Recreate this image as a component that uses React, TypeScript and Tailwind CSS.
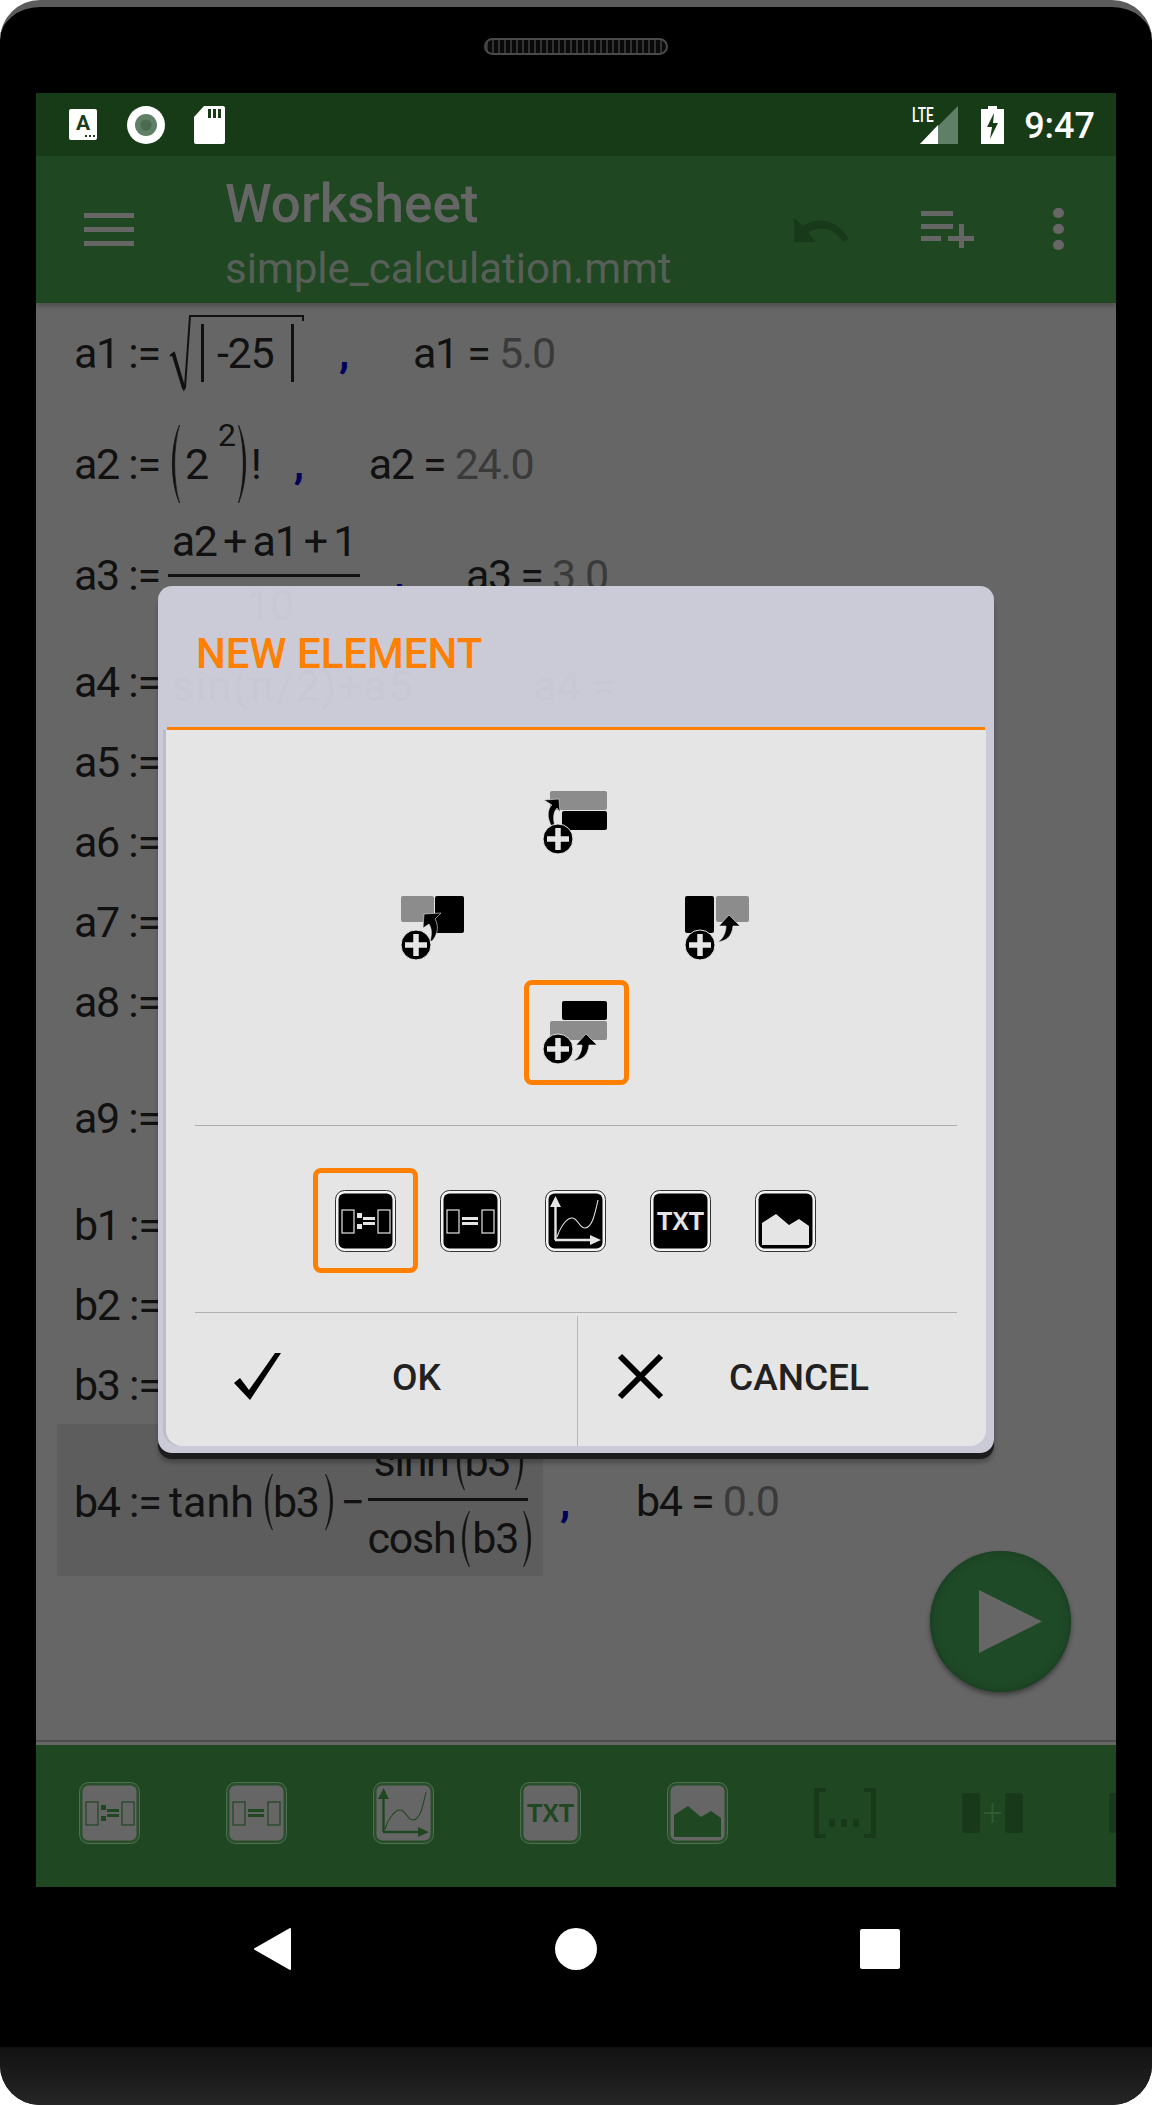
import type { ReactNode } from "react";

const MATH = "text-[43px] tracking-[-1.3px] leading-none text-[#111] whitespace-nowrap";
const RESULT = "text-[#3a3a3a]";

function Comma() {
  return <span className="text-[42px] leading-none font-bold text-[#00005a]">,</span>;
}

function Paren({ h, flip = false, className = "" }: { h: number; flip?: boolean; className?: string }) {
  return (
    <svg width="10" height={h} viewBox="0 0 10 100" preserveAspectRatio="none" className={`shrink-0 ${flip ? "-scale-x-100" : ""} ${className}`}>
      <path d="M9.5 0C0 28 0 72 9.5 100C3 72 3 28 9.5 0Z" fill="#111" stroke="#111" strokeWidth="0.8" />
    </svg>
  );
}

function Label({ children }: { children: ReactNode }) {
  return <span className={`${MATH} w-[94px] shrink-0`}>{children}</span>;
}

function Row({ name, className }: { name: string; className: string }) {
  return (
    <div className={`flex items-center px-[17px] ${className}`}>
      <Label>{name} :=</Label>
    </div>
  );
}

// the small "insert block" icons in the dialog
function InsertIcon({ kind }: { kind: "top" | "left" | "right" | "bottom" }) {
  const plus = (cx: number, cy: number) => (
    <g>
      <circle cx={cx} cy={cy} r="15" fill="#000" stroke="#e5e5e5" strokeWidth="1" />
      <path d={`M${cx - 11} ${cy}H${cx + 11}M${cx} ${cy - 11}V${cy + 11}`} stroke="#e5e5e5" strokeWidth="5.5" />
    </g>
  );
  return (
    <svg width="66" height="66" viewBox="0 -1 66 66">
      {kind === "top" && (
        <g>
          <rect x="7" y="0" width="57" height="19" rx="2" fill="#8c8c8c" />
          <rect x="19" y="20" width="45" height="19" rx="2" fill="#000" />
          <path d="M9 36C3 26 5 17 9 14L1 9L16 8L17 21L14 17C10 21 10 28 12 36Z" fill="#000" stroke="#e5e5e5" strokeWidth="0.6" />
          {plus(15, 48)}
        </g>
      )}
      {kind === "left" && (
        <g>
          <rect x="0" y="0" width="33" height="26" rx="2" fill="#8c8c8c" />
          <rect x="34" y="0" width="29" height="37" rx="2" fill="#000" />
          <path d="M32 44C38 36 37 28 34 23L40 17L23 18L22 32L28 28C31 33 31 38 29 46Z" fill="#000" stroke="#e5e5e5" strokeWidth="0.6" />
          {plus(15, 49)}
        </g>
      )}
      {kind === "right" && (
        <g>
          <rect x="0" y="0" width="29" height="37" rx="2" fill="#000" />
          <rect x="31" y="0" width="33" height="26" rx="2" fill="#8c8c8c" />
          {plus(15, 49)}
          <path d="M32 46C38 44 41 36 41 30L34 30L44 19L55 30L48 30C47 40 42 45 32 46Z" fill="#000" stroke="#e5e5e5" strokeWidth="0.6" />
        </g>
      )}
      {kind === "bottom" && (
        <g>
          <rect x="19" y="0" width="45" height="19" rx="2" fill="#000" />
          <rect x="7" y="20" width="57" height="19" rx="2" fill="#8c8c8c" />
          {plus(15, 48)}
          <path d="M29 60C36 58 39 50 39 44L33 44L43 33L54 44L46 44C45 54 40 59 29 60Z" fill="#000" stroke="#e5e5e5" strokeWidth="0.6" />
        </g>
      )}
    </svg>
  );
}

type ToolKind = "assign" | "equals" | "plot" | "text" | "image";

function ToolIcon({ kind, edge, ring, fill, fg }: { kind: ToolKind; edge: string; ring: string; fill: string; fg: string }) {
  return (
    <svg width="61" height="62" viewBox="0 0 61 62">
      <rect x="0.5" y="0.5" width="60" height="61" rx="9" fill={ring} stroke={edge} />
      <rect x="3.5" y="3.5" width="54" height="55" rx="6" fill={fill} />
      {kind === "assign" && (
        <g fill="none" stroke={fg} strokeWidth="1.2">
          <rect x="7" y="20" width="12" height="23" />
          <rect x="43" y="20" width="12" height="23" />
          <path d="M28 28.5H40M28 33.5H40" strokeWidth="3" />
          <rect x="22" y="23" width="5" height="5" fill={fg} stroke="none" />
          <rect x="22" y="34" width="5" height="5" fill={fg} stroke="none" />
        </g>
      )}
      {kind === "equals" && (
        <g fill="none" stroke={fg} strokeWidth="1.2">
          <rect x="7" y="20" width="12" height="23" />
          <rect x="42" y="20" width="12" height="23" />
          <path d="M22 28.5H38M22 33.5H38" strokeWidth="3" />
        </g>
      )}
      {kind === "plot" && (
        <g fill="none" stroke={fg}>
          <path d="M10.5 50V14M10 50H48" strokeWidth="2.4" />
          <path d="M5 17L10.5 6L16 17ZM45 45L56 50L45 55Z" fill={fg} stroke="none" />
          <path d="M12 47C17 33 23 28 27 28C33 28 34 38 40 38C47 38 50 24 53 10" strokeWidth="1.1" />
        </g>
      )}
      {kind === "text" && (
        <text x="30.5" y="40" textAnchor="middle" fontFamily="Liberation Sans, sans-serif" fontWeight="700" fontSize="25" fill={fg}>
          TXT
        </text>
      )}
      {kind === "image" && <path d="M7 33L21 24L34 35L44 29L54 36V55H7Z" fill={fg} />}
    </svg>
  );
}

const TOOLS: ToolKind[] = ["assign", "equals", "plot", "text", "image"];

function Dialog() {
  return (
    <div className="absolute left-[122px] top-[493px] w-[836px] h-[867px] rounded-[14px] bg-[#cbcbd8] shadow-[0_6px_0_#1c1c1c,0_10px_4px_rgba(0,0,0,0.25)] flex flex-col">
      <div className="h-[141px] pl-[38px] flex items-center shrink-0 relative">
        {/* worksheet showing faintly through the title */}
        <span className="absolute left-[88px] top-[-1px] text-[43px] leading-[40px] text-[#c8c8d5]">10</span>
        <span className="absolute left-[14px] top-[80px] text-[43px] leading-[40px] tracking-[1.5px] text-[#c8c8d5] whitespace-nowrap">sin(π/2)+a5</span>
        <span className="absolute left-[375px] top-[80px] text-[43px] leading-[40px] text-[#c8c8d5] whitespace-nowrap">a4 =</span>
        <span className="text-[42px] font-medium text-[#ff8000] mt-[-6px] relative">NEW ELEMENT</span>
      </div>
      <div className="h-[3px] mx-[9px] bg-[#ff8000] shrink-0" />
      <div className="mx-[8px] flex-1 bg-[#e5e5e5] rounded-b-[16px] flex flex-col mb-[7px] shadow-[-3px_0_0_#bcbccb]">
        <div className="pt-[40px] flex justify-center">
          <div className="grid grid-cols-[142px_142px_142px] grid-rows-[105px_105px_105px] justify-items-center items-center">
            <div />
            <InsertIcon kind="top" />
            <div />
            <InsertIcon kind="left" />
            <div />
            <InsertIcon kind="right" />
            <div />
            <div className="w-[105px] h-[105px] rounded-[8px] border-[5px] border-[#ff8000] flex items-center justify-center">
              <InsertIcon kind="bottom" />
            </div>
            <div />
          </div>
        </div>
        <div className="h-px bg-[#b0b0b0] mx-[29px] mt-[40px] shrink-0" />
        <div className="flex justify-center mt-[42px] pr-px">
          {TOOLS.map((t, i) => (
            <div
              key={t}
              className={`w-[105px] h-[105px] flex items-center justify-center rounded-[8px] ${i === 0 ? "border-[5px] border-[#ff8000]" : ""}`}
            >
              <ToolIcon kind={t} edge="#333" ring="#f4f4f4" fill="#000" fg="#e5e5e5" />
            </div>
          ))}
        </div>
        <div className="h-px bg-[#b0b0b0] mx-[29px] mt-[39px] shrink-0" />
        <div className="flex flex-1 pt-[3px]">
          <div className="w-[412px] border-r border-[#b8b8b8] relative flex items-center">
            <svg width="47" height="47" viewBox="0 0 47 47" className="ml-[68px] mt-[-10px]">
              <path d="M0 30L6 25L15 37L41 0H47L16 47Z" fill="#000" />
            </svg>
            <span className="ml-[111px] text-[37px] font-medium text-[#212121] mt-[-6px]">OK</span>
          </div>
          <div className="flex-1 flex items-center">
            <svg width="47" height="47" viewBox="0 0 47 47" className="ml-[39px] mt-[-10px]">
              <path d="M3 3L44 44M44 3L3 44" stroke="#000" strokeWidth="6" />
            </svg>
            <span className="ml-[65px] text-[37px] font-medium text-[#212121] mt-[-6px]">CANCEL</span>
          </div>
        </div>
      </div>
    </div>
  );
}

export default function App() {
  return (
    <div className="w-[1152px] h-[2105px] bg-black font-[Roboto,sans-serif] flex flex-col overflow-hidden relative rounded-t-[40px] rounded-b-[40px] border-t-[7px] border-[#5c5c5c]">
      {/* speaker */}
      <div className="h-[86px] shrink-0 flex justify-center items-start pt-[31px]">
        <div className="w-[184px] h-[17px] rounded-full border-2 border-[#4a4a4a] bg-[repeating-linear-gradient(90deg,#333_0_2px,#0a0a0a_2px_6px)]" />
      </div>

      <div className="mx-[36px] h-[1794px] flex flex-col relative shrink-0">
        {/* status bar */}
        <div className="h-[63px] bg-[#173a17] flex items-center shrink-0 relative">
          <svg width="28" height="31" viewBox="0 0 28 31" className="ml-[33px]">
            <rect width="28" height="31" rx="2" fill="#fff" />
            <text x="14" y="21" textAnchor="middle" fontSize="21" fontWeight="700" fontFamily="Roboto, sans-serif" fill="#1c3d1c">A</text>
            <path d="M16 26h2v2h-2zM20 26h2v2h-2zM24 26h2v2h-2z" fill="#1c3d1c" />
          </svg>
          <svg width="38" height="38" viewBox="0 0 38 38" className="ml-[30px]">
            <circle cx="19" cy="19" r="19" fill="#fff" />
            <circle cx="19" cy="19" r="11" fill="#5f7f66" />
            <circle cx="19" cy="19" r="5.5" fill="#4a6b50" />
          </svg>
          <svg width="31" height="38" viewBox="0 0 31 38" className="ml-[29px]">
            <path d="M10 0H29a2 2 0 0 1 2 2V36a2 2 0 0 1-2 2H2a2 2 0 0 1-2-2V11Z" fill="#fff" />
            <path d="M14 3h3v9h-3zM19 3h3v9h-3zM24 3h3v9h-3z" fill="#173a17" />
          </svg>
          <div className="flex-1" />
          <div className="relative w-[46px] h-[38px] mr-[23px]">
            <svg width="38" height="38" viewBox="0 0 38 38" className="absolute right-0 top-0">
              <path d="M38 0V38H0Z" fill="#5f7f66" />
              <path d="M18 19V38H0Z" fill="#fff" />
            </svg>
            <span className="absolute left-0 top-[-3px] text-[21px] leading-[24px] font-medium text-white scale-x-[0.65] origin-left">LTE</span>
          </div>
          <svg width="23" height="38" viewBox="0 0 23 38">
            <path d="M7 0H16V3H23V38H0V3H7Z" fill="#fff" />
            <path d="M13 7L6 21H11L9 33L17 17H12Z" fill="#173a17" />
          </svg>
          <span className="ml-[20px] mr-[21px] mt-[2px] text-[36px] font-medium text-white leading-none">9:47</span>
        </div>

        {/* app bar */}
        <div className="h-[147px] bg-[#1f4722] flex items-center shrink-0 shadow-[0_3px_5px_rgba(0,0,0,0.25)] relative z-10">
          <div className="ml-[48px] w-[50px] flex flex-col gap-[9px]">
            <div className="h-[5px] bg-[#666]" />
            <div className="h-[5px] bg-[#666]" />
            <div className="h-[5px] bg-[#666]" />
          </div>
          <div className="ml-[91px] flex flex-col mt-[6px]">
            <span className="text-[53px] leading-[60px] font-medium text-[#666]">Worksheet</span>
            <span className="text-[42px] leading-[46px] text-[#585f58] whitespace-nowrap mt-[12px]">simple_calculation.mmt</span>
          </div>
          <div className="flex-1" />
          <svg width="55" height="24" viewBox="0 0 55 24" className="mr-[72px]">
            <path d="M0 0V24H22L14 15C25 7 40 9 49 24L55 21C45 3 25 -3 9 8Z" fill="#183a1a" />
          </svg>
          <svg width="53" height="37" viewBox="0 0 53 37" className="mr-[142px]">
            <path d="M0 0H32V5H0ZM0 13H32V18H0ZM0 25H20V30H0ZM38 13H43V25H53V30H43V37H38V30H27V25H38Z" fill="#666" />
          </svg>
          <div className="absolute left-[1017px] top-[52px] flex flex-col gap-[6px]">
            <div className="w-[11px] h-[10px] rounded-full bg-[#666]" />
            <div className="w-[11px] h-[10px] rounded-full bg-[#666]" />
            <div className="w-[11px] h-[10px] rounded-full bg-[#666]" />
          </div>
        </div>

        {/* worksheet */}
        <div className="flex-1 bg-[#666] px-[21px] pt-[10px] relative">
          <div className="h-[80px] flex items-center px-[17px]">
            <Label>a1 :=</Label>
            <div className="relative w-[136px] h-[77px] flex items-center pl-[49px]">
              <svg width="136" height="77" viewBox="0 0 136 77" className="absolute left-0 top-0">
                <path d="M2 41L6 38L16 74L17 72L22 1H135V6" fill="none" stroke="#111" strokeWidth="2" />
                <path d="M5 38L16 74" stroke="#111" strokeWidth="3.5" />
                <path d="M34.5 9V67M124.5 9V67" stroke="#111" strokeWidth="3" />
              </svg>
              <span className={MATH}>-25</span>
            </div>
            <span className="ml-[35px] w-[74px]"><Comma /></span>
            <span className={MATH}>a1 = <span className={RESULT}>5.0</span></span>
          </div>

          <div className="h-[130px] mt-[6px] flex items-center px-[17px]">
            <Label>a2 :=</Label>
            <Paren h={78} className="ml-[2px]" />
            <span className={`${MATH} ml-[5px]`}>2</span>
            <span className="text-[32px] leading-none text-[#111] ml-[10px] mb-[58px]">2</span>
            <Paren h={78} flip className="ml-[2px]" />
            <span className={`${MATH} ml-[3px]`}>!</span>
            <span className="ml-[33px] w-[75px]"><Comma /></span>
            <span className={MATH}>a2 = <span className={RESULT}>24.0</span></span>
          </div>

          <div className="h-[92px] flex items-center px-[17px]">
            <Label>a3 :=</Label>
            <div className="relative w-[192px] h-[3px] bg-[#111]">
              <span className={`${MATH} absolute inset-x-0 bottom-[14px] text-center [word-spacing:-3px]`}>a2 + a1 + 1</span>
            </div>
            <span className="ml-[34px] w-[72px]"><Comma /></span>
            <span className={MATH}>a3 = <span className={RESULT}>3.0</span></span>
          </div>

          <Row name="a4" className="h-[80px] mt-[21px]" />
          <Row name="a5" className="h-[80px]" />
          <Row name="a6" className="h-[80px]" />
          <Row name="a7" className="h-[80px]" />
          <Row name="a8" className="h-[80px]" />
          <Row name="a9" className="h-[80px] mt-[36px]" />
          <Row name="b1" className="h-[80px] mt-[27px]" />
          <Row name="b2" className="h-[80px]" />
          <Row name="b3" className="h-[80px]" />

          <div className="h-[152px] -mt-px w-[486px] bg-[#5d5d5d] pl-[17px] flex items-center relative">
            <div className="flex items-center mt-[4px]">
              <Label>b4 :=</Label>
              <span className="text-[43px] leading-none text-[#111] ml-px">tanh</span>
              <Paren h={56} className="ml-[9px]" />
              <span className={MATH}>b3</span>
              <Paren h={56} flip className="ml-[6px]" />
              <span className={`${MATH} ml-[6px] w-[27px]`}>−</span>
            </div>
            <div className="relative w-[160px] h-[3px] bg-[#111] -mt-[2px]">
              <div className="absolute left-[6px] bottom-[11px] flex items-center">
                <span className={MATH}>sinh</span>
                <Paren h={56} className="ml-[6px]" />
                <span className={MATH}>b3</span>
                <Paren h={56} flip className="ml-[5px]" />
              </div>
              <div className="absolute left-0 top-[13px] flex items-center">
                <span className={MATH}>cosh</span>
                <Paren h={56} className="ml-[5px]" />
                <span className={`${MATH} ml-[2px]`}>b3</span>
                <Paren h={56} flip className="ml-[5px]" />
              </div>
            </div>
            <div className="absolute left-[503px] top-[56px] flex items-center whitespace-nowrap">
              <span className="w-[76px]"><Comma /></span>
              <span className={MATH}>b4 = <span className={RESULT}>0.0</span></span>
            </div>
          </div>

          {/* run button */}
          <div className="absolute left-[894px] top-[1248px] w-[141px] h-[141px] rounded-full bg-[#1f4a27] shadow-[0_3px_5px_rgba(0,0,0,0.4),inset_0_0_8px_#173a1e] flex items-center justify-center">
            <svg width="63" height="63" viewBox="0 0 63 63" className="ml-[19px]">
              <path d="M0 0L63 31.5L0 63Z" fill="#666" />
            </svg>
          </div>
          <div className="absolute left-0 right-0 bottom-[3px] h-[2px] bg-[#4d4d4d]" />
        </div>

        {/* bottom toolbar */}
        <div className="h-[142px] bg-[#1f4722] flex items-center shrink-0 overflow-hidden pl-[43px] gap-[86px]">
          {TOOLS.map((t) => (
            <div key={t} className="w-[61px] shrink-0 flex -mt-[6px]">
              <ToolIcon kind={t} edge="#4f7050" ring="#2a4f2c" fill="#666" fg="#1f4722" />
            </div>
          ))}
          <svg width="62" height="50" viewBox="0 0 62 50" className="shrink-0 -mt-[6px]">
            <path d="M0 0H12V4H5V46H12V50H0ZM62 0H50V4H57V46H50V50H62ZM15 31H21V39H15ZM27 31H33V39H27ZM39 31H45V39H39Z" fill="#183a1a" />
          </svg>
          <svg width="61" height="40" viewBox="0 0 61 40" className="shrink-0 -mt-[6px]">
            <rect width="18" height="40" rx="3" fill="#183a1a" />
            <rect x="43" width="18" height="40" rx="3" fill="#183a1a" />
            <path d="M22 19H39V21H22ZM29.5 10H31.5V30H29.5Z" fill="#2f5a32" />
          </svg>
          <div className="w-[61px] h-[40px] rounded-[3px] bg-[#183a1a] shrink-0 -mt-[6px]" />
        </div>

        <Dialog />
      </div>

      {/* nav keys */}
      <div className="h-[160px] shrink-0 relative flex items-center">
        <svg width="37" height="42" viewBox="0 0 37 42" className="ml-[254px] mt-[-36px]">
          <path d="M36 1V41L1 21Z" fill="#fff" stroke="#fff" strokeWidth="2" strokeLinejoin="round" />
        </svg>
        <div className="ml-[264px] mt-[-36px] w-[42px] h-[42px] rounded-full bg-white" />
        <div className="ml-[263px] mt-[-36px] w-[40px] h-[40px] rounded-[2px] bg-white" />
      </div>
      <div className="flex-1 bg-gradient-to-b from-[#111] to-[#262626]" />
    </div>
  );
}
